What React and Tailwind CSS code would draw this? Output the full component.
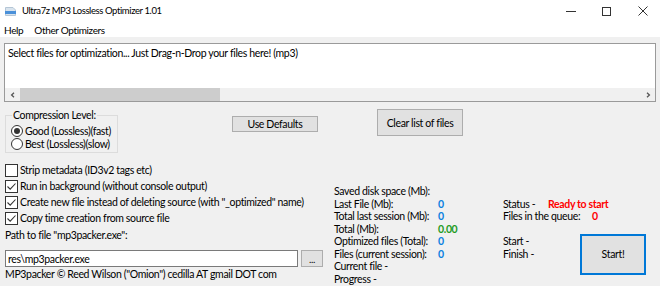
import { useState } from "react";

const CheckBox = ({ checked }) => (
  <svg viewBox="0 0 13 13" className="w-[13px] h-[13px] shrink-0">
    <rect x="0.5" y="0.5" width="12" height="12" fill="white" stroke="#333" />
    {checked && (
      <path d="M2.5 6.5 L5.2 9.2 L10.5 3.5" fill="none" stroke="#333" strokeWidth="1.1" />
    )}
  </svg>
);

const Radio = ({ checked }) => (
  <svg viewBox="0 0 12 12" className="w-[12px] h-[12px] shrink-0">
    <circle cx="6" cy="6" r="5.5" fill="white" stroke="#333" />
    {checked && <circle cx="6" cy="6" r="3" fill="#333" />}
  </svg>
);

const Chevron = ({ dir }) => (
  <svg viewBox="0 0 6 6" className="w-[6px] h-[6px]">
    <path
      d={dir === "left" ? "M4 0.8 L1.6 3 L4 5.2" : "M2 0.8 L4.4 3 L2 5.2"}
      fill="none"
      stroke="#555"
      strokeWidth="1.3"
    />
  </svg>
);

const stats = [
  { label: "Saved disk space (Mb):", value: "", color: "" },
  { label: "Last File (Mb):", value: "0", color: "text-[#0a7fe0]" },
  { label: "Total last session (Mb):", value: "0", color: "text-[#0a7fe0]" },
  { label: "Total (Mb):", value: "0.00", color: "text-[#1f9b1f]" },
  { label: "Optimized files (Total):", value: "0", color: "text-[#0a7fe0]" },
  { label: "Files (current session):", value: "0", color: "text-[#0a7fe0]" },
  { label: "Current file -", value: "", color: "" },
  { label: "Progress -", value: "", color: "" },
];

export default function App() {
  const [opts, setOpts] = useState([false, true, true, true]);
  const [level, setLevel] = useState("good");
  const [path, setPath] = useState("res\\mp3packer.exe");

  const options = [
    "Strip metadata (ID3v2 tags etc)",
    "Run in background (without console output)",
    'Create new file instead of deleting source (with "_optimized" name)',
    "Copy time creation from source file",
  ];

  return (
    <div className="w-[660px] h-[286px] overflow-hidden bg-[#f0f0f0] text-black text-[10.5px] leading-[14px] tracking-[-0.35px] font-['Lato',sans-serif] whitespace-nowrap">
      {/* Title bar */}
      <div className="h-[22px] bg-white flex items-center">
        <svg viewBox="0 0 11 9" className="w-[11px] h-[9px] ml-[5px] mt-[1px]">
          <path d="M0.5 0.5 H8 L10.5 3 V8.5 H0.5 Z" fill="#d9e4ee" stroke="#b5c6d6" />
          <rect x="0" y="4" width="11" height="3" fill="#4a90d9" />
        </svg>
        <span className="ml-[6px] text-[9.5px] tracking-[-0.4px]">Ultra7z MP3 Lossless Optimizer 1.01</span>
        <div className="ml-auto mr-[12px] flex items-center">
          <div className="w-[10px] h-px bg-[#333]" />
          <div className="ml-[26px] w-[9px] h-[9px] border border-[#333]" />
          <svg viewBox="0 0 10 10" className="ml-[27px] w-[10px] h-[10px]">
            <path d="M0.5 0.5 L9.5 9.5 M9.5 0.5 L0.5 9.5" stroke="#333" strokeWidth="1" />
          </svg>
        </div>
      </div>

      {/* Menu bar */}
      <div className="h-[15px] bg-white flex items-center gap-[11px] pl-[4px] text-[10px]">
        <span>Help</span>
        <span>Other Optimizers</span>
      </div>

      {/* File list */}
      <div className="mt-[6px] mx-[4px] h-[59px] border border-[#9a9a9a] bg-white flex flex-col">
        <div className="flex-1 pl-[3px] pt-[2px]">
          Select files for optimization... Just Drag-n-Drop your files here! (mp3)
        </div>
        <div className="h-[13px] bg-[#f0f0f0] flex items-center">
          <span className="w-[15px] flex justify-center"><Chevron dir="left" /></span>
          <div className="w-[200px] h-[13px] bg-[#cdcdcd]" />
          <span className="ml-auto w-[15px] flex justify-center"><Chevron dir="right" /></span>
        </div>
      </div>

      {/* Compression + buttons */}
      <div className="flex items-start h-[51px]">
        <div className="relative mt-[13px] ml-[5px] w-[113px] h-[38px] border border-[#dcdcdc] pl-[5px] pt-[8px]">
          <span className="absolute -top-[8px] left-[6px] px-px bg-[#f0f0f0]">Compression Level:</span>
          <label className="h-[13px] flex items-center gap-[2px]" onClick={() => setLevel("good")}>
            <Radio checked={level === "good"} />
            <span>Good (Lossless)(fast)</span>
          </label>
          <label className="h-[13px] flex items-center gap-[2px]" onClick={() => setLevel("best")}>
            <Radio checked={level === "best"} />
            <span>Best (Lossless)(slow)</span>
          </label>
        </div>
        <button className="mt-[14px] ml-[114px] w-[86px] h-[16px] bg-[#e1e1e1] border border-[#adadad] flex items-center justify-center">
          Use Defaults
        </button>
        <button className="mt-[7px] ml-[59px] w-[86px] h-[27px] bg-[#e1e1e1] border border-[#adadad] flex items-center justify-center">
          Clear list of files
        </button>
      </div>

      {/* Bottom area */}
      <div className="flex">
        <div className="w-[334px] pl-[5px] pt-[9px]">
          {options.map((o, i) => (
            <label
              key={i}
              className="h-[16px] flex items-center gap-[2px]"
              onClick={() => setOpts((p) => p.map((v, j) => (j === i ? !v : v)))}
            >
              <CheckBox checked={opts[i]} />
              <span>{o}</span>
            </label>
          ))}
          <div className="h-[14px] mt-[2px] flex items-center">Path to file "mp3packer.exe":</div>
          <div className="mt-[8px] flex gap-[3px]">
            <input
              value={path}
              onChange={(e) => setPath(e.target.value)}
              className="w-[293px] h-[17px] border border-[#7a7a7a] bg-white px-[2px] outline-none"
            />
            <button className="w-[22px] h-[17px] bg-[#e1e1e1] border border-[#adadad] text-[10px] leading-none">...</button>
          </div>
          <div className="h-[14px]">MP3packer © Reed Wilson ("Omion") cedilla AT gmail DOT com</div>
        </div>

        <div className="pt-[32px] flex">
          <div className="w-[169px]">
            {stats.map((s) => (
              <div key={s.label} className="h-[12.5px] leading-[12.5px] flex">
                <span className="w-[104px] shrink-0">{s.label}</span>
                <span className={`font-bold ${s.color}`}>{s.value}</span>
              </div>
            ))}
          </div>
          <div className="w-[150px] leading-[12.5px]">
            <div className="h-[12.5px]" />
            <div className="h-[12.5px] flex">
              <span className="w-[45px]">Status -</span>
              <span className="font-bold text-[#ff0000]">Ready to start</span>
            </div>
            <div className="h-[12.5px] flex">
              <span className="w-[89px]">Files in the queue:</span>
              <span className="font-bold text-[#ff0000]">0</span>
            </div>
            <div className="flex">
              <div className="w-[77px] pt-[12.5px]">
                <div className="h-[12.5px]">Start -</div>
                <div className="h-[12.5px]">Finish -</div>
              </div>
              <button className="mt-[11px] w-[66px] h-[41px] bg-[#e1e1e1] border-2 border-[#0078d7] flex items-center justify-center">
                Start!
              </button>
            </div>
          </div>
        </div>
      </div>
    </div>
  );
}
